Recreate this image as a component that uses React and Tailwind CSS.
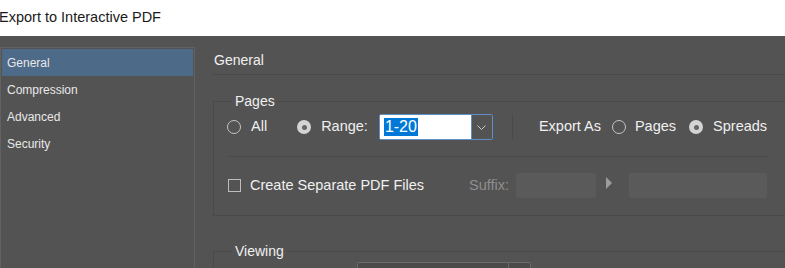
import React from 'react';

const font = { fontFamily: '"Liberation Sans", Arial, sans-serif' };

const Radio = ({ checked, className = '' }) =>
  checked ? (
    <span className={`flex h-[14px] w-[14px] shrink-0 items-center justify-center rounded-full bg-[#d4d4d4] ${className}`}>
      <span className="block h-[5px] w-[5px] rounded-full bg-[#666666]" />
    </span>
  ) : (
    <span className={`block h-[14px] w-[14px] shrink-0 rounded-full border border-[#c4c4c4] ${className}`} />
  );

const sideItems = ['General', 'Compression', 'Advanced', 'Security'];

const App = () => {
  return (
    <div className="flex h-[268px] w-[785px] flex-col overflow-hidden bg-[#535353]" style={font}>
      <div className="flex h-[36px] shrink-0 items-center bg-white pb-[1px] text-[14.5px] text-[#1a1a1a]">
        <span className="-ml-[1px]">Export to Interactive PDF</span>
      </div>

      <div className="flex flex-1 pt-[11px]">
        {/* sidebar */}
        <aside className="w-[195px] shrink-0 border-t border-r border-l border-[#626262] px-[1px] pt-[1px]">
          {sideItems.map((item, i) => (
            <div
              key={item}
              className={`flex h-[27px] items-center pl-[5px] text-[12px] text-[#e8e8e8] ${
                i === 0 ? 'bg-[#4d6a88]' : ''
              }`}
            >
              {item}
            </div>
          ))}
        </aside>

        {/* main panel */}
        <main className="flex-1 pl-[18px]">
          <div className="flex h-[28px] items-center border-b border-[#4a4a4a] pl-[1px] text-[14px] text-[#f0f0f0]">
            General
          </div>

          <section className="relative mt-[26px] h-[115px] w-[620px] border border-[#4a4a4a]">
            <span className="absolute -top-[9px] left-[18px] bg-[#535353] px-[3px] text-[14px] leading-[16px] text-[#f0f0f0]">
              Pages
            </span>

            <div className="mt-[12px] flex h-[26px] items-center text-[14.5px] text-[#f0f0f0]">
              <Radio className="ml-[13px]" />
              <span className="ml-[10px]">All</span>
              <Radio checked className="ml-[30px]" />
              <span className="ml-[10px]">Range:</span>
              <div className="ml-[11px] flex h-[26px] w-[114px] rounded-[2px] border border-[#5d8fc4]">
                <div className="flex flex-1 items-center bg-white pl-[4px]">
                  <span className="bg-[#0078d7] px-[1px] text-[16px] leading-[18px] text-white">1-20</span>
                </div>
                <div className="flex w-[21px] items-center justify-center border-l border-[#5d8fc4] bg-[#535353]">
                  <svg width="9" height="5" viewBox="0 0 9 5" fill="none">
                    <path d="M0.5 0.5 L4.5 4.5 L8.5 0.5" stroke="#c8c8c8" strokeWidth="1" />
                  </svg>
                </div>
              </div>
              <span className="ml-[19px] block h-[26px] w-px bg-[#4a4a4a]" />
              <span className="ml-[26px]">Export As</span>
              <Radio className="ml-[11px]" />
              <span className="ml-[9px]">Pages</span>
              <Radio checked className="ml-[13px]" />
              <span className="ml-[10px]">Spreads</span>
            </div>

            <div className="ml-[14px] mt-[16px] h-px w-[541px] bg-[#4a4a4a]" />

            <div className="mt-[16px] flex h-[25px] items-center text-[14.5px] text-[#f0f0f0]">
              <span className="ml-[14px] block h-[13px] w-[13px] border border-[#bdbdbd]" />
              <span className="ml-[9px]">Create Separate PDF Files</span>
              <span className="ml-[45px] text-[#8e8e8e]">Suffix:</span>
              <span className="ml-[7px] block h-[25px] w-[80px] rounded-[2px] bg-[#5a5a5a]" />
              <svg className="ml-[10px] -mt-[6px]" width="7" height="12" viewBox="0 0 7 12">
                <path d="M0 0 L6 6 L0 12 Z" fill="#9c9c9c" />
              </svg>
              <span className="ml-[16px] block h-[25px] w-[138px] rounded-[2px] bg-[#5a5a5a]" />
            </div>
          </section>

          <section className="relative mt-[35px] h-[40px] w-[620px] border border-[#4a4a4a]">
            <span className="absolute -top-[9px] left-[18px] bg-[#535353] px-[3px] text-[14px] leading-[16px] text-[#f0f0f0]">
              Viewing
            </span>
            <div className="ml-[143px] mt-[10px] flex h-[24px] w-[174px] rounded-[2px] border border-[#6a6a6a] bg-[#4a4a4a]">
              <div className="flex-1" />
              <div className="w-[22px] border-l border-[#6a6a6a]" />
            </div>
          </section>
        </main>
      </div>
    </div>
  );
};

export default App;
